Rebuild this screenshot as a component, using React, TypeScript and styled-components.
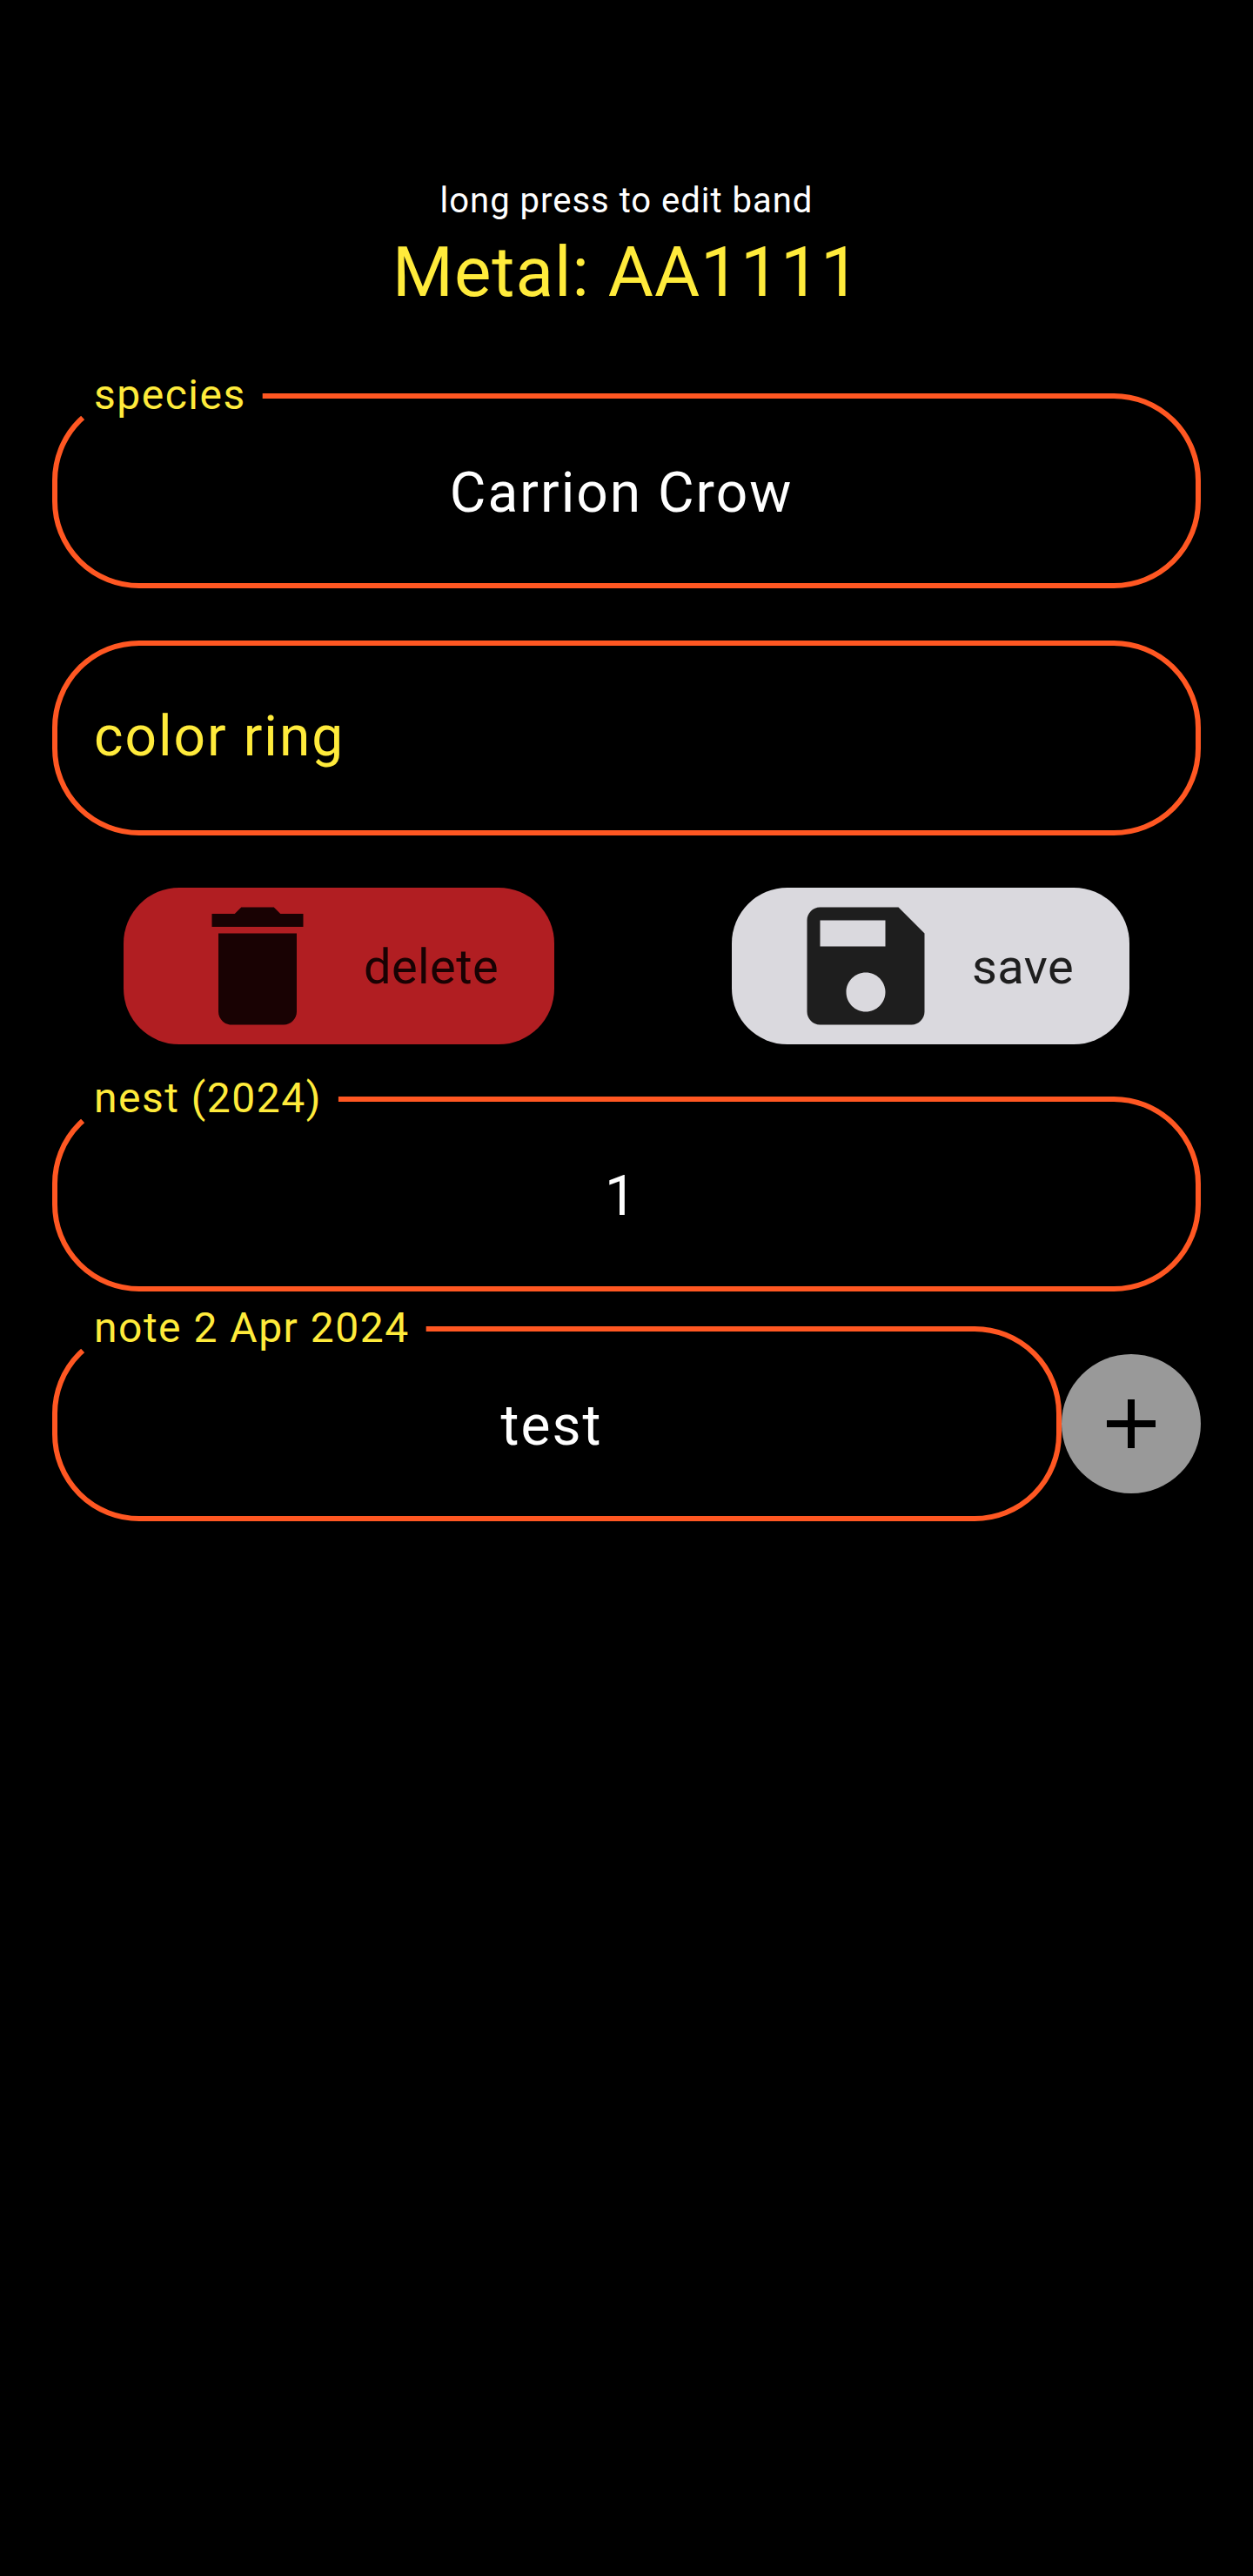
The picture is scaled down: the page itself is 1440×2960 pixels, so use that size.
import React from "react";
import styled, { createGlobalStyle } from "styled-components";

const GlobalStyle = createGlobalStyle`
  html, body { margin: 0; background: #000; }
  * { box-sizing: border-box; }
`;

const Screen = styled.main`
  display: flex;
  flex-direction: column;
  min-height: 2960px;
  padding: 202px 60px 0;
  background: #000;
  color: #fff;
  font-family: Roboto, "Liberation Sans", sans-serif;
`;

const Header = styled.header`
  display: flex;
  flex-direction: column;
  align-items: center;
  height: 250px;
  letter-spacing: 1px;
`;

const Hint = styled.div`
  font-size: 40px;
  line-height: 57px;
`;

const Band = styled.div`
  font-size: 80px;
  line-height: 108px;
  color: #ffeb3b;
`;

const Form = styled.div`
  display: flex;
  flex-direction: column;
  gap: 60px;
`;

const Records = styled.div`
  display: flex;
  flex-direction: column;
  gap: 40px;
`;

const Field = styled.div`
  position: relative;
  isolation: isolate;
  display: flex;
  flex: 1;
  align-items: center;
  min-height: 224px;
  border: 6px solid #ff5722;
  border-radius: 100px;
`;

const FloatingLabel = styled.span`
  position: absolute;
  top: -34px;
  left: 42px;
  padding-right: 19px;
  font-size: 48px;
  line-height: 59px;
  letter-spacing: 1.5px;
  white-space: pre;
  color: #ffeb3b;

  /* Opens the outline behind the label, ending on a radial cut in the corner. */
  &::before {
    content: "";
    position: absolute;
    z-index: -1;
    top: 18px;
    left: -48px;
    right: 0;
    height: 110px;
    background: #000;
    clip-path: polygon(100px 110px, 0 -1px, 100% -1px, 100% 30px, 100px 30px);
  }
`;

const Value = styled.div`
  flex: 1;
  padding: 5px 54px 0 42px;
  font-size: 64px;
  line-height: 75px;
  letter-spacing: 2px;
  text-align: center;
`;

const Placeholder = styled.div`
  padding: 0 42px 3px;
  font-size: 64px;
  line-height: 75px;
  letter-spacing: 2px;
  color: #ffeb3b;
`;

const Actions = styled.div`
  display: flex;
  justify-content: space-between;
  padding: 0 82px;
`;

const ActionButton = styled.button<{ $bg: string; $fg: string }>`
  display: flex;
  align-items: center;
  gap: 32px;
  height: 180px;
  padding: 0 64px;
  border: 0;
  border-radius: 64px;
  background: ${(p) => p.$bg};
  color: ${(p) => p.$fg};
  font: 400 56px/66px Roboto, "Liberation Sans", sans-serif;
  letter-spacing: 0.4px;
`;

const ActionText = styled.span`
  padding-top: 2px;
`;

const NoteRow = styled.div`
  display: flex;
  align-items: center;
`;

const AddButton = styled.button`
  display: flex;
  align-items: center;
  justify-content: center;
  width: 160px;
  height: 160px;
  padding: 0;
  border: 0;
  border-radius: 50%;
  background: #999;
  color: #000;
`;

const Glyph = styled.svg`
  display: block;
  flex: none;
  fill: currentColor;
`;

const Icon = ({ d, size }: { d: string; size: number }) => (
  <Glyph width={size} height={size} viewBox="0 0 24 24">
    <path d={d} />
  </Glyph>
);

const DELETE = "M6 19c0 1.1.9 2 2 2h8c1.1 0 2-.9 2-2V7H6v12zM19 4h-3.5l-1-1h-5l-1 1H5v2h14V4z";
const SAVE =
  "M17 3H5c-1.11 0-2 .9-2 2v14c0 1.1.89 2 2 2h14c1.1 0 2-.9 2-2V7l-4-4zm-5 16c-1.66 0-3-1.34-3-3s1.34-3 3-3 3 1.34 3 3-1.34 3-3 3zm3-10H5V5h10v4z";
const ADD = "M19 13h-6v6h-2v-6H5v-2h6V5h2v6h6v2z";

const LabeledField = ({ label, value }: { label: string; value: string }) => (
  <Field>
    <FloatingLabel>{label}</FloatingLabel>
    <Value>{value}</Value>
  </Field>
);

export default function App() {
  return (
    <Screen>
      <GlobalStyle />
      <Header>
        <Hint>long press to edit band</Hint>
        <Band>Metal: AA1111</Band>
      </Header>
      <Form>
        <LabeledField label="species" value="Carrion Crow" />
        <Field>
          <Placeholder>color ring</Placeholder>
        </Field>
        <Actions>
          <ActionButton $bg="#b11e22" $fg="#190203">
            <Icon d={DELETE} size={180} />
            <ActionText>delete</ActionText>
          </ActionButton>
          <ActionButton $bg="#dad9de" $fg="#1e1e1e">
            <Icon d={SAVE} size={180} />
            <ActionText>save</ActionText>
          </ActionButton>
        </Actions>
        <Records>
          <LabeledField label="nest (2024)" value="1" />
          <NoteRow>
            <LabeledField label="note 2 Apr 2024" value="test" />
            <AddButton aria-label="add note">
              <Icon d={ADD} size={96} />
            </AddButton>
          </NoteRow>
        </Records>
      </Form>
    </Screen>
  );
}
